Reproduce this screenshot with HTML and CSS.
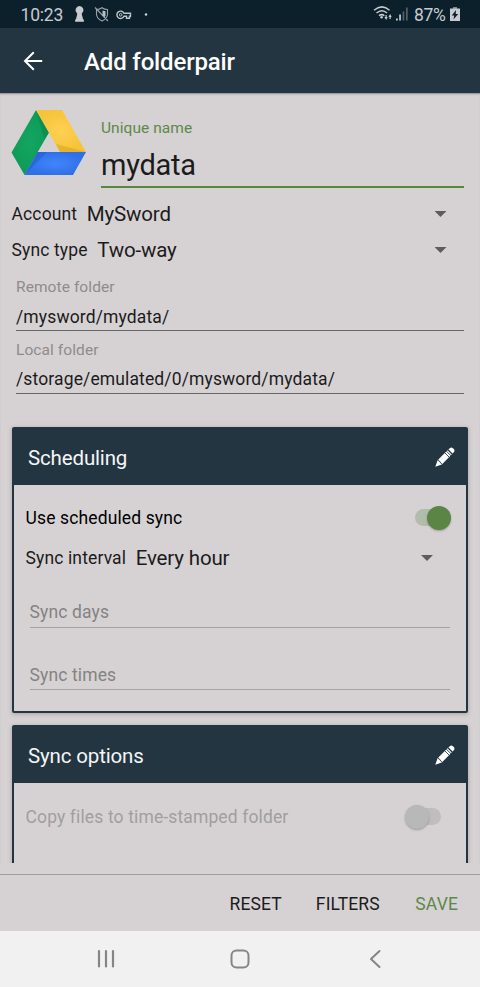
FILE: index.html
```html
<!DOCTYPE html>
<html lang="en">
<head>
<meta charset="utf-8">
<title>Add folderpair</title>
<link rel="stylesheet" href="styles.css">
</head>
<body>
<header class="status">
  <span class="clock">10:23</span>
  <svg class="status-left" width="80" height="20" viewBox="72 4 80 20">
    <path fill="#c5cbd0" d="M79.500 5a4 4 0 0 1 2.800 6.800l-.6 1.300l1.300 4.900l.9 1v1.800h-8.800V19l.9-1l1.300-4.900l-.6-1.300A4 4 0 0 1 79.500 5z"/>
    <g fill="none" stroke="#98a2a9" stroke-width="1.100"><path d="M96.500 8.500q3 0 5.500-1.800q2.500 1.800 5.500 1.800v4.500q0 4.500-5.500 7q-5.500-2.500-5.500-7zM95 6.500l13 13.500"/></g>
    <path fill="#b8c0c5" d="M102.500 9.500l3 .8v4l-1 2.200l-2-2z"/>
    <path fill="none" stroke="#bdc5ca" stroke-width="1.400" d="M124 12.300a3.700 3.700 0 1 0 0 3h2.500v2h3v-2h1v-3z"/><circle cx="120.700" cy="13.800" r="1.300" fill="none" stroke="#bdc5ca"/>
    <circle cx="146" cy="13.500" r="1.200" fill="#d3d8db"/>
  </svg>
  <svg class="status-right" width="36" height="20" viewBox="373 4 36 20">
    <g fill="none" stroke="#c5cbd0" stroke-width="1.500"><path d="M374 10.300q8-6.800 15.500 0M376.500 13q5.500-4.600 10.500 0M379 15.700q2.800-2.200 5.300 0"/></g>
    <circle cx="381.600" cy="17.200" r="1.300" fill="#c5cbd0"/>
    <path fill="#c5cbd0" d="M384.500 17h1v-2h1.200v2h1l-1.600 3zM388.500 17h1v2h1.200v-2h1l-1.600-3z"/>
    <path fill="#c5cbd0" d="M396 18.500h1.800v2H396zM399.200 14.500h1.700v6h-1.700z"/>
    <path fill="#52616c" d="M402.600 11.500h1.700v9h-1.700zM406 7.500h1.700v13H406z"/>
  </svg>
  <span class="percent">87%</span>
  <svg class="battery" width="10" height="15" viewBox="0 0 10 15"><path fill="#7d8991" d="M3 0h4v2H3z"/><path fill="#c5cbd0" d="M0 1.500h10V14H0z"/><path fill="#0c202c" d="M6 3L1.800 8.500h2.400L3.500 12.500L8.200 7H5.700z"/></svg>
</header>
<div class="appbar">
  <svg width="20" height="20" viewBox="0 0 20 20"><path fill="none" stroke="#fff" stroke-width="2" d="M19.200 10H2M10.800 1.200L2 10l8.800 8.800"/></svg>
  <h1>Add folderpair</h1>
</div>
<main class="content">
  <section class="identity">
    <svg class="logo" width="76" height="66" viewBox="0 0 76 66">
      <defs>
        <radialGradient id="g"><stop offset="0" stop-color="#13a661"/><stop offset="1" stop-color="#0e9a58"/></radialGradient>
        <radialGradient id="y"><stop offset="0" stop-color="#ffd052"/><stop offset="1" stop-color="#f6c43b"/></radialGradient>
        <radialGradient id="b"><stop offset="0" stop-color="#4285fa"/><stop offset="1" stop-color="#2f70e8"/></radialGradient>
      </defs>
      <path fill="url(#g)" d="M25 0L38 22.500L13.500 65L.5 42.500z"/>
      <path fill="#0b8549" d="M25 0L38 22.500L33.500 29z" opacity=".55"/>
      <path fill="url(#y)" d="M25 0h26l24 42H49z"/>
      <path fill="#d9a91f" d="M45 34L75 42H49z" opacity=".6"/>
      <path fill="url(#b)" d="M26.500 42H75L62 65H13.500z"/>
      <path fill="#1f5cc8" d="M26.500 42H36L13.500 65z" opacity=".5"/>
    </svg>
    <div class="name-field">
      <label>Unique name</label>
      <div class="name">mydata</div>
    </div>
  </section>
  <div class="row"><span>Account</span><span class="choice">MySword</span><i class="caret"></i></div>
  <div class="row"><span>Sync type</span><span class="choice">Two-way</span><i class="caret"></i></div>
  <div class="folder"><label>Remote folder</label><div class="path">/mysword/mydata/</div></div>
  <div class="folder local"><label>Local folder</label><div class="path">/storage/emulated/0/mysword/mydata/</div></div>

  <section class="card">
    <div class="card-head"><h2>Scheduling</h2>
      <svg width="20" height="20" viewBox="0 0 20 20"><path fill="#fff" d="M.3 19.700L2.600 13.200L12.500 3.300L16.700 7.500L6.800 17.400zM13.300 2.500l1.800-1.600q1.400-1 2.800.3l.9.900q1.200 1.400.2 2.800l-1.600 1.800z"/><path fill="none" stroke="#233541" stroke-width=".9" d="M9.500 5.500l5 5M11.200 4l4.800 4.800M13 2.500l5 5M3 12.500q.2 1.800 2 2q.2 1.800 2 2.500"/></svg>
    </div>
    <div class="card-body">
      <div class="option"><span class="use">Use scheduled sync</span><span class="switch on"></span></div>
      <div class="option interval"><span>Sync interval</span><span class="choice">Every hour</span><i class="caret"></i></div>
      <div class="entry days">Sync days</div>
      <div class="entry times">Sync times</div>
    </div>
  </section>
  <section class="card">
    <div class="card-head"><h2>Sync options</h2>
      <svg width="20" height="20" viewBox="0 0 20 20"><path fill="#fff" d="M.3 19.700L2.600 13.200L12.500 3.300L16.700 7.500L6.800 17.400zM13.300 2.500l1.800-1.600q1.400-1 2.800.3l.9.900q1.200 1.400.2 2.800l-1.600 1.800z"/><path fill="none" stroke="#233541" stroke-width=".9" d="M9.500 5.500l5 5M11.200 4l4.800 4.800M13 2.500l5 5M3 12.500q.2 1.800 2 2q.2 1.800 2 2.500"/></svg>
    </div>
    <div class="card-body second">
      <div class="option disabled"><span>Copy files to time-stamped folder</span><span class="switch off"></span></div>
    </div>
  </section>
</main>
<footer class="actions"><span>RESET</span><span class="filters">FILTERS</span><span class="save">SAVE</span></footer>
<nav class="nav">
  <svg width="20" height="20" viewBox="0 0 20 20"><path stroke="#858585" stroke-width="2.200" stroke-linecap="round" d="M3 2v15.500M10 2v15.500M17 2v15.500"/></svg>
  <svg width="20" height="20" viewBox="0 0 20 20"><rect x="1.500" y="1.500" width="17" height="17" rx="5" fill="none" stroke="#858585" stroke-width="2"/></svg>
  <svg width="20" height="20" viewBox="0 0 20 20"><path fill="none" stroke="#858585" stroke-width="2" stroke-linecap="round" stroke-linejoin="round" d="M14.500 2L6 10l8.500 8"/></svg>
</nav>
</body>
</html>
```

FILE: styles.css
```css
* { box-sizing: border-box; }
body {
  margin: 0;
  width: 480px;
  height: 987px;
  display: flex;
  flex-direction: column;
  overflow: hidden;
  background: #d6d2d3;
  color: #1c1b1c;
  font-family: Roboto, sans-serif;
  font-size: 17.5px;
  letter-spacing: .13px;
  white-space: nowrap;
}
h1, h2 { margin: 0; }
svg { display: block; flex: none; }

.status {
  height: 28px;
  flex: none;
  display: flex;
  align-items: center;
  padding: 1px 20px 0 20.5px;
  background: #0c202c;
  color: #c5cbd0;
}
.clock { width: 51.5px; font-size: 17.500px; line-height: 28px; letter-spacing: -.2px; }
.status-right { margin-left: auto; margin-top: -1px; }
.percent { margin: 0 3px 0 5px; width: 33px; font-size: 17.500px; letter-spacing: -.3px; }

.appbar {
  height: 65px;
  flex: none;
  display: flex;
  align-items: center;
  gap: 41px;
  padding: 2px 23px 0;
  background: #233541;
  color: #fff;
}
.appbar svg { margin-top: -2px; }
.appbar h1 { font-size: 24px; font-weight: 500; line-height: 32px; letter-spacing: -.15px; }

.content {
  height: 770px;
  flex: none;
  overflow: hidden;
  padding: 0 12px;
  box-shadow: inset 0 2px 2px -1px #8b898a;
}
.identity { height: 103px; display: flex; }
.logo { margin: 17px 14px 0 -1px; }
.name-field { flex: 1; margin-right: 4px; padding-top: 25px; height: 95px; border-bottom: 2px solid #55873e; }
.name-field label { display: block; height: 20px; line-height: 20px; font-size: 15.500px; letter-spacing: .05px; color: #5c8949; }
.name { height: 50px; line-height: 55px; font-size: 29px; letter-spacing: -.25px; }

.row { display: flex; align-items: center; height: 36px; padding-right: 21.5px; margin-left: -.5px; }
.choice { margin-left: 9.500px; font-size: 20.500px; letter-spacing: -.15px; }
.caret {
  width: 12px;
  height: 6px;
  margin-left: auto;
  background: #5e5c5d;
  clip-path: polygon(0 0, 100% 0, 50% 100%);
}
.folder { height: 63px; margin: 0 4px; padding-top: 9px; border-bottom: 1px solid #676566; }
.folder label { display: block; height: 20px; line-height: 20px; font-size: 15.500px; letter-spacing: .08px; color: #8e8b8c; }
.path { height: 40px; line-height: 40px; }
.local .path { line-height: 38px; }

.card {
  border: 2px solid #233541;
  border-radius: 2px;
  box-shadow: 0 1px 4px #77747680;
  margin-top: 12px;
}
.local + .card { margin-top: 33px; height: 286px; }
.card-head {
  height: 56px;
  display: flex;
  align-items: center;
  justify-content: space-between;
  padding: 2px 11px 0 14px;
  background: #233541;
  color: #f4f5f6;
}
.card-head svg { margin-top: -2px; }
.card-head h2 { font-size: 20.500px; font-weight: 400; letter-spacing: -.15px; }
.card-body { padding: 13px 12px 0 11.5px; }
.card-body.second { height: 100px; padding-top: 14px; }
.option { display: flex; align-items: center; height: 40px; }
.use { color: #000; }
.interval { padding-right: 21px; }
.disabled { color: #a19e9f; }
.switch { position: relative; width: 36px; height: 24px; margin-left: auto; }
.switch::before { content: ""; position: absolute; top: 3px; left: 0; width: 34px; height: 17px; border-radius: 9px; background: #b1bcaa; }
.switch::after { content: ""; position: absolute; top: 0; width: 24px; height: 24px; border-radius: 50%; box-shadow: 0 1px 2px #7779; }
.switch.on { margin-right: 3.5px; }
.switch.on::after { right: 0; background: #5a8544; }
.switch.off { margin-right: 13px; }
.switch.off::before { left: 2px; background: #c0bebd; }
.switch.off::after { left: -.5px; background: #b9b8b8; }
.entry { margin: 0 4px; color: #858283; border-bottom: 1px solid #a5a2a3; }
.days { height: 50px; padding-top: 18px; line-height: 32px; }
.times { height: 62px; padding-top: 32px; line-height: 31px; }

.actions {
  height: 57px;
  margin-top: 11px;
  flex: none;
  display: flex;
  align-items: center;
  justify-content: flex-end;
  padding: 2px 22px 0;
  border-top: 1px solid #a09d9e;
}
.filters { margin: 0 35.5px 0 34px; }
.save { color: #5c8949; }
.nav {
  height: 56px;
  flex: none;
  display: flex;
  align-items: center;
  justify-content: space-between;
  padding: 0 95.5px;
  background: #f1f1f1;
}
```
